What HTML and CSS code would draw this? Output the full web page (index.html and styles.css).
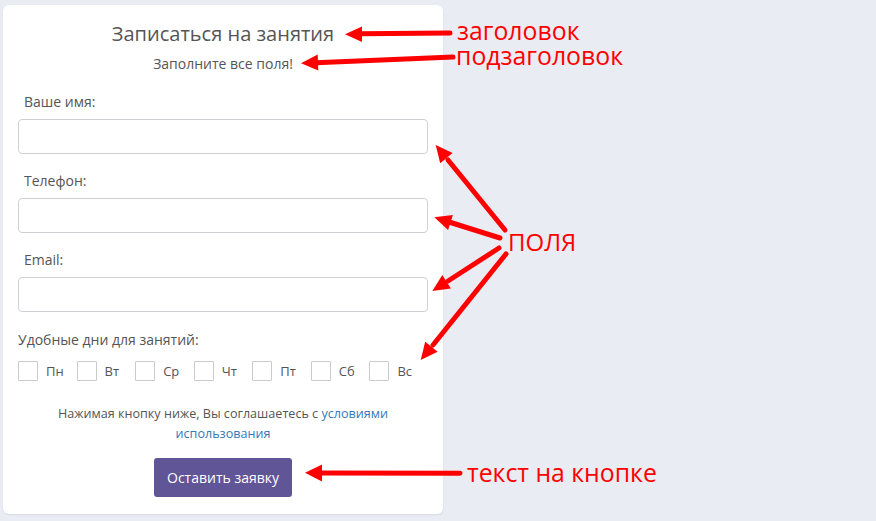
FILE: index.html
```html
<!DOCTYPE html>
<html lang="ru">
<head>
<meta charset="utf-8">
<title>Записаться на занятия</title>
<link rel="stylesheet" href="styles.css">
</head>
<body>
<div class="page">
  <form class="card">
    <h1 class="title">Записаться на занятия</h1>
    <p class="subtitle">Заполните все поля!</p>

    <div class="field">
      <label class="label">Ваше имя:</label>
      <input class="input" type="text">
    </div>
    <div class="field">
      <label class="label">Телефон:</label>
      <input class="input" type="text">
    </div>
    <div class="field">
      <label class="label">Email:</label>
      <input class="input" type="text">
    </div>

    <div class="days-label">Удобные дни для занятий:</div>
    <div class="days">
      <label class="day"><span class="box"></span>Пн</label>
      <label class="day"><span class="box"></span>Вт</label>
      <label class="day"><span class="box"></span>Ср</label>
      <label class="day"><span class="box"></span>Чт</label>
      <label class="day"><span class="box"></span>Пт</label>
      <label class="day"><span class="box"></span>Сб</label>
      <label class="day"><span class="box"></span>Вс</label>
    </div>

    <p class="agree">Нажимая кнопку ниже, Вы соглашаетесь с <a class="link" href="#">условиями использования</a></p>

    <div class="actions">
      <button class="button" type="button">Оставить заявку</button>
    </div>
  </form>

  <div class="notes">
    <svg class="arrows" width="876" height="521" viewBox="0 0 876 521">
      <g stroke="#ff0000" stroke-width="5" stroke-linecap="round" fill="none">
        <line x1="450" y1="33" x2="360" y2="33.8"/>
        <line x1="453" y1="57" x2="316" y2="62.7"/>
        <line x1="505" y1="230" x2="448" y2="160"/>
        <line x1="500" y1="238" x2="449" y2="222"/>
        <line x1="499" y1="248" x2="448" y2="281"/>
        <line x1="506" y1="254" x2="433" y2="345"/>
        <line x1="460" y1="473.3" x2="320" y2="473"/>
      </g>
      <g fill="#ff0000">
        <polygon points="345,34.3 362,26.5 362,42"/>
        <polygon points="301,63.3 317.7,54.6 318.3,70.6"/>
        <polygon points="435.7,145 452.6,153.1 440.2,163.2"/>
        <polygon points="434.3,217.3 452.9,214.9 448.1,230.1"/>
        <polygon points="432.3,291 442.3,275.1 450.9,288.6"/>
        <polygon points="420.7,360 425.2,341.8 437.6,351.8"/>
        <polygon points="305,472.8 322,464.5 322,481.5"/>
      </g>
    </svg>
    <span class="note note-title">заголовок</span>
    <span class="note note-sub">подзаголовок</span>
    <span class="note note-fields">ПОЛЯ</span>
    <span class="note note-button">текст на кнопке</span>
  </div>
</div>
</body>
</html>
```
FILE: styles.css
```css
* { box-sizing: border-box; }

html, body {
  margin: 0;
  padding: 0;
  background: #e9ecf2;
  font-family: "Open Sans", "Liberation Sans", sans-serif;
}

.page {
  position: relative;
  width: 876px;
  height: 521px;
  padding: 5px 0 0 3px;
  overflow: hidden;
}

.card {
  width: 440px;
  height: 509px;
  background: #ffffff;
  border-radius: 6px;
  box-shadow: 0 1px 2px rgba(0, 0, 0, 0.08);
  padding: 14px 15px 16px;
  display: flex;
  flex-direction: column;
}

.title {
  margin: 0;
  font-size: 20px;
  font-weight: 400;
  line-height: 30px;
  color: #555;
  text-align: center;
}

.subtitle {
  margin: 5px 0 18px;
  font-size: 14px;
  line-height: 20px;
  color: #555;
  text-align: center;
}

.field {
  display: flex;
  flex-direction: column;
  margin-bottom: 17px;
}

.label {
  font-size: 14px;
  line-height: 20px;
  color: #555;
  padding-left: 6px;
  margin-bottom: 7px;
}

.input {
  display: block;
  width: 410px;
  height: 35px;
  border: 1px solid #cfd1d6;
  border-radius: 4px;
  background: #fff;
  margin: 0;
  padding: 0 10px;
}

.days-label {
  font-size: 14px;
  line-height: 20px;
  color: #555;
  margin-top: 1px;
}

.days {
  display: grid;
  grid-template-columns: repeat(7, 1fr);
  margin-top: 11px;
}

.day {
  display: flex;
  align-items: center;
  gap: 8px;
  font-size: 13px;
  line-height: 20px;
  color: #555;
}

.box {
  display: block;
  width: 20px;
  height: 20px;
  border: 1px solid #cbcbcb;
  border-radius: 1px;
  background: #fff;
}

.agree {
  margin: 23px 0 0;
  padding: 0 30px;
  font-size: 12.6px;
  line-height: 20px;
  color: #555;
  text-align: center;
}

.link {
  color: #337ab7;
  text-decoration: none;
}

.actions {
  display: flex;
  justify-content: center;
  margin-top: 14px;
}

.button {
  height: 39px;
  width: 138px;
  padding: 0;
  border: none;
  border-radius: 3px;
  background: #5f5597;
  color: #fff;
  font-family: "Open Sans", "Liberation Sans", sans-serif;
  font-size: 14px;
}

.notes {
  position: absolute;
  left: 0;
  top: 0;
  width: 876px;
  height: 521px;
  pointer-events: none;
}

.arrows {
  position: absolute;
  left: 0;
  top: 0;
}

.note {
  position: absolute;
  font-family: "Open Sans", "Liberation Sans", sans-serif;
  font-size: 24.8px;
  line-height: 22px;
  color: #ff0000;
  white-space: nowrap;
}

.note-title { left: 457px; top: 19px; }
.note-sub { left: 456px; top: 44px; }
.note-fields { left: 508px; top: 231px; font-size: 24px; }
.note-button { left: 467px; top: 461px; }
```
